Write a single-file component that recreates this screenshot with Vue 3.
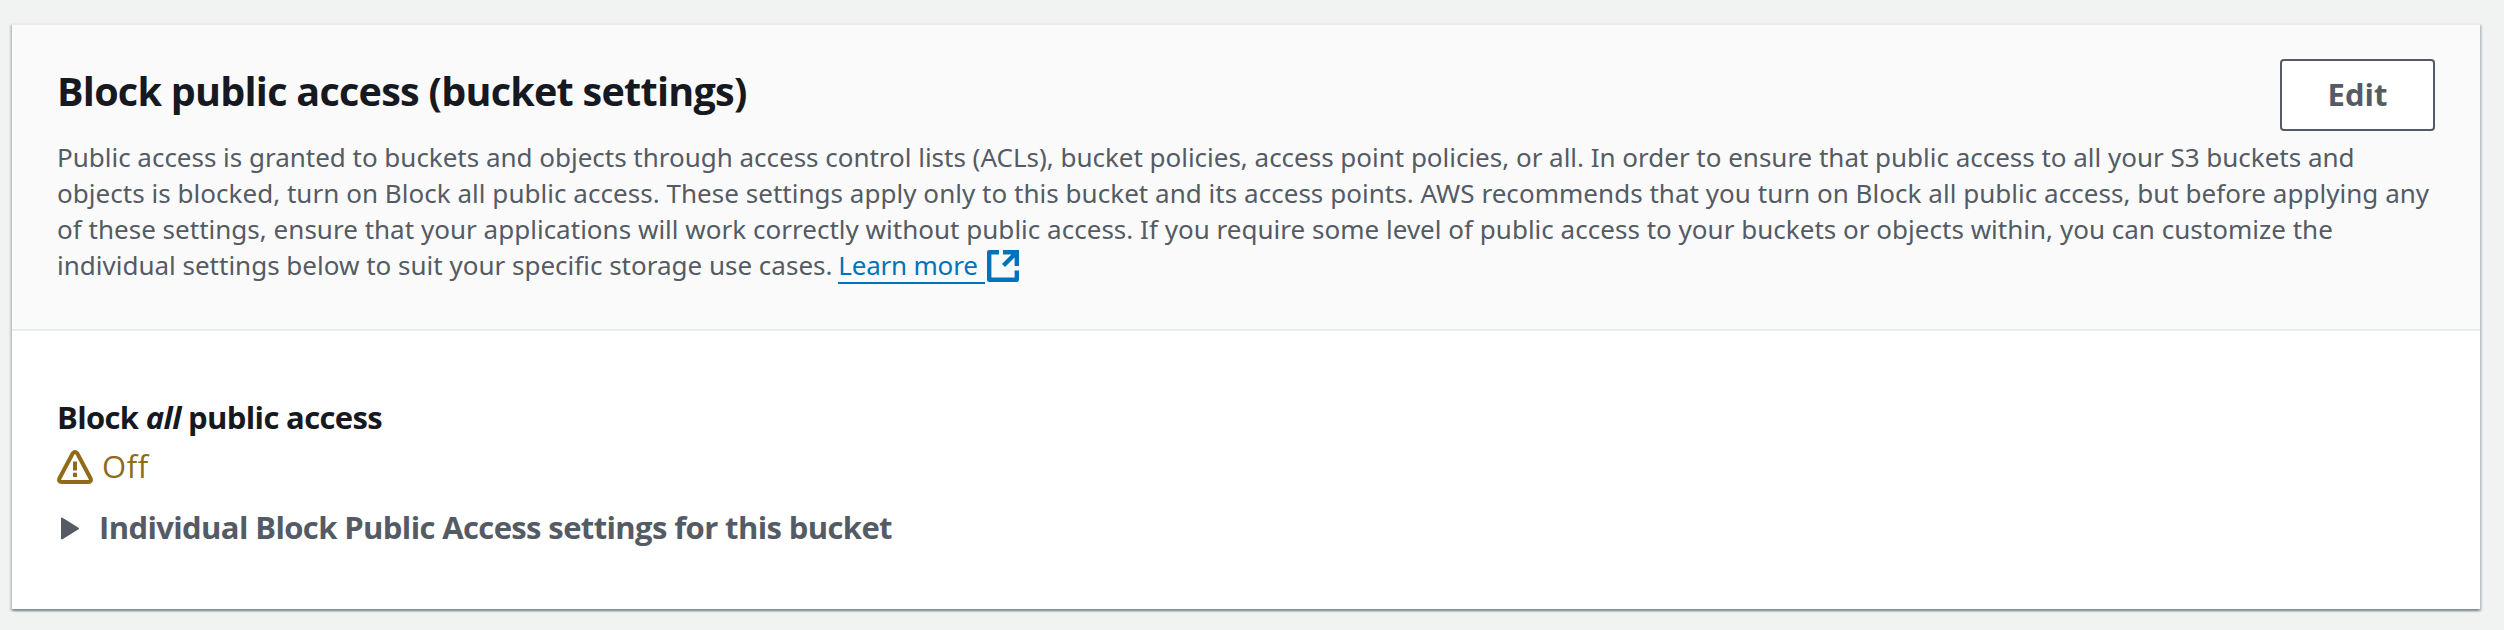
<script setup>
const description = [
  { id: 'l1', text: 'Public access is granted to buckets and objects through access control lists (ACLs), bucket policies, access point policies, or all. In order to ensure that public access to all your S3 buckets and' },
  { id: 'l2', text: 'objects is blocked, turn on Block all public access. These settings apply only to this bucket and its access points. AWS recommends that you turn on Block all public access, but before applying any' },
  { id: 'l3', text: 'of these settings, ensure that your applications will work correctly without public access. If you require some level of public access to your buckets or objects within, you can customize the' },
]
</script>

<template>
  <main class="page">
    <section class="card">
      <header class="card-header">
        <div class="title-row">
          <h2 class="title">Block public access (bucket settings)</h2>
          <button class="edit" type="button">Edit</button>
        </div>
        <p class="description">
          <span v-for="line in description" :key="line.id" class="line" :class="line.id">{{ line.text }}</span>
          <span class="line">individual settings below to suit your specific storage use cases. <a class="link"><span class="link-text">Learn more</span><svg class="external" viewBox="0 0 32 32" fill="none" stroke="currentColor" stroke-width="4.400"><path d="M12 2.200H2.200v27.600h27.600v-9.300" stroke-linejoin="round" /><path d="M16 2.200h13.800V16M29 3 16.500 15.500" /></svg></a></span>
        </p>
      </header>
      <div class="card-body">
        <div class="label">Block <em>all</em> public access</div>
        <div class="status">
          <svg class="warning" viewBox="0 0 36 34" fill="none" stroke="currentColor">
            <path d="M15.800 3.300 2.500 28.200Q1 32 4.800 32H31.200Q35 32 33.500 28.200L20.200 3.300Q18 .7 15.800 3.300Z" stroke-width="4" stroke-linejoin="round" />
            <path d="M18 11.500v9M18 22.700v4.300" stroke-width="4" />
          </svg>
          <span class="off">Off</span>
        </div>
        <div class="expander">
          <svg class="caret" viewBox="0 0 18 23"><path d="M1 1.500v20L17 11.500Z" fill="currentColor" stroke="currentColor" stroke-width="2" stroke-linejoin="round" /></svg>
          <span class="expander-text">Individual Block Public Access settings for this bucket</span>
        </div>
      </div>
    </section>
  </main>
</template>

<style>
body {
  background: #f2f3f3;
}
</style>

<style scoped>
.page {
  box-sizing: border-box;
  height: 630px;
  padding: 23px 24px 21px 12px;
  background: #f1f3f3;
  font-family: "Open Sans", "Noto Sans", sans-serif;
  color: #16191f;
  overflow: hidden;
}
.card {
  box-sizing: border-box;
  height: 586px;
  background: #fff;
  border-top: 2px solid #eaeded;
  box-shadow: 0 2px 2px 0 rgba(0, 28, 36, 0.3), 2px 2px 2px 0 rgba(0, 28, 36, 0.15), -2px 2px 2px 0 rgba(0, 28, 36, 0.15);
}
.card-header {
  box-sizing: border-box;
  height: 306px;
  padding: 34px 45px 0 45px;
  background: #fafafa;
  border-bottom: 2px solid #eaeded;
}
.title-row {
  display: flex;
  justify-content: space-between;
  height: 72px;
}
.title {
  margin: 8px 0 0;
  font-size: 39.5px;
  line-height: 48px;
  font-weight: 700;
  letter-spacing: -0.73px;
  white-space: nowrap;
}
.edit {
  box-sizing: border-box;
  width: 155px;
  height: 72px;
  padding: 0 0 2px;
  border: 2px solid #545b64;
  border-radius: 4px;
  background: #fff;
  color: #545b64;
  font: 700 31px/44px "Open Sans", "Noto Sans", sans-serif;
}
.description {
  margin: 8px 0 0;
  font: 400 26px/36px "Noto Sans", sans-serif;
  color: #545b64;
}
.line {
  display: block;
  height: 36px;
  white-space: nowrap;
}
.l1 {
  letter-spacing: -0.015px;
}
.l2 {
  letter-spacing: 0.034px;
}
.l3 {
  letter-spacing: 0.018px;
}
.link {
  color: #0073bb;
}
.link-text {
  display: inline-block;
  box-sizing: border-box;
  width: 147px;
  height: 37px;
  margin-left: -1px;
  border-bottom: 2px solid #0073bb;
  letter-spacing: -0.2px;
  vertical-align: top;
}
.external {
  width: 32px;
  height: 32px;
  margin: 3px 0 0 2px;
  vertical-align: top;
}
.card-body {
  padding: 64px 45px 0;
}
.label {
  font-size: 31px;
  line-height: 44px;
  font-weight: 700;
  letter-spacing: -0.65px;
}
.status {
  display: flex;
  align-items: center;
  height: 48px;
  margin-top: 3px;
  color: #8f6a17;
}
.warning {
  width: 36px;
  height: 34px;
  margin: 2px 9px 0 0;
}
.off {
  font-size: 31px;
  line-height: 48px;
  font-weight: 400;
  letter-spacing: 0.6px;
}
.expander {
  display: flex;
  align-items: center;
  height: 44px;
  margin-top: 15px;
  color: #545b64;
}
.caret {
  width: 18px;
  height: 23px;
  margin: 3px 20px 0 4px;
}
.expander-text {
  font-size: 31px;
  line-height: 44px;
  font-weight: 700;
  letter-spacing: -0.62px;
  white-space: nowrap;
}
</style>
